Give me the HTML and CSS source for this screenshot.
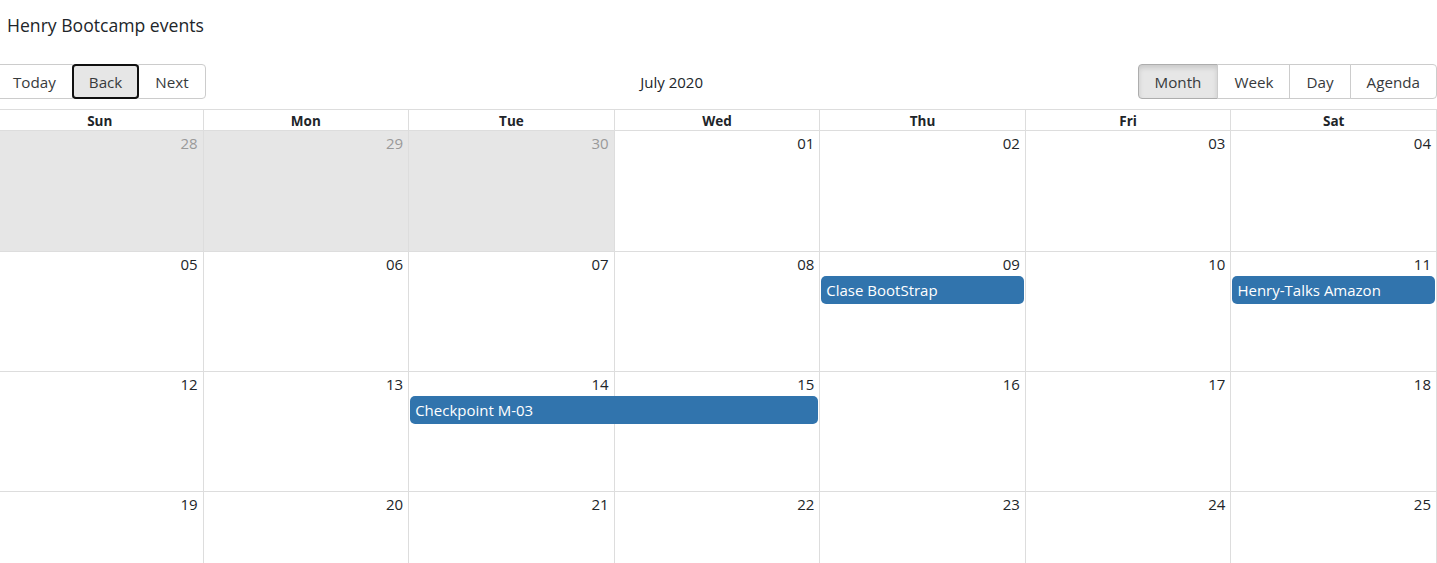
FILE: index.html
```html
<!DOCTYPE html>
<html lang="en">
<head>
<meta charset="utf-8">
<title>Henry Bootcamp events</title>
<link rel="stylesheet" href="styles.css">
</head>
<body>
<div class="app">
  <h1 class="page-title">Henry Bootcamp events</h1>
  <div class="calendar">
    <div class="toolbar">
      <span class="btn-group">
        <button type="button" class="btn">Today</button>
        <button type="button" class="btn is-focused">Back</button>
        <button type="button" class="btn">Next</button>
      </span>
      <span class="toolbar-label">July 2020</span>
      <span class="btn-group">
        <button type="button" class="btn is-active">Month</button>
        <button type="button" class="btn">Week</button>
        <button type="button" class="btn">Day</button>
        <button type="button" class="btn">Agenda</button>
      </span>
    </div>
    <div class="month-view">
      <div class="month-header">
        <div class="header-cell">Sun</div>
        <div class="header-cell">Mon</div>
        <div class="header-cell">Tue</div>
        <div class="header-cell">Wed</div>
        <div class="header-cell">Thu</div>
        <div class="header-cell">Fri</div>
        <div class="header-cell">Sat</div>
      </div>

      <div class="month-row">
        <div class="day-bg c1 off-range"></div>
        <div class="day-bg c2 off-range"></div>
        <div class="day-bg c3 off-range"></div>
        <div class="day-bg c4"></div>
        <div class="day-bg c5"></div>
        <div class="day-bg c6"></div>
        <div class="day-bg c7"></div>
        <div class="date-cell c1 off-range-text">28</div>
        <div class="date-cell c2 off-range-text">29</div>
        <div class="date-cell c3 off-range-text">30</div>
        <div class="date-cell c4">01</div>
        <div class="date-cell c5">02</div>
        <div class="date-cell c6">03</div>
        <div class="date-cell c7">04</div>
      </div>

      <div class="month-row">
        <div class="day-bg c1"></div>
        <div class="day-bg c2"></div>
        <div class="day-bg c3"></div>
        <div class="day-bg c4"></div>
        <div class="day-bg c5"></div>
        <div class="day-bg c6"></div>
        <div class="day-bg c7"></div>
        <div class="date-cell c1">05</div>
        <div class="date-cell c2">06</div>
        <div class="date-cell c3">07</div>
        <div class="date-cell c4">08</div>
        <div class="date-cell c5">09</div>
        <div class="date-cell c6">10</div>
        <div class="date-cell c7">11</div>
        <div class="segment c5 span1"><div class="event">Clase BootStrap</div></div>
        <div class="segment c7 span1"><div class="event">Henry-Talks Amazon</div></div>
      </div>

      <div class="month-row">
        <div class="day-bg c1"></div>
        <div class="day-bg c2"></div>
        <div class="day-bg c3"></div>
        <div class="day-bg c4"></div>
        <div class="day-bg c5"></div>
        <div class="day-bg c6"></div>
        <div class="day-bg c7"></div>
        <div class="date-cell c1">12</div>
        <div class="date-cell c2">13</div>
        <div class="date-cell c3">14</div>
        <div class="date-cell c4">15</div>
        <div class="date-cell c5">16</div>
        <div class="date-cell c6">17</div>
        <div class="date-cell c7">18</div>
        <div class="segment c3 span2"><div class="event">Checkpoint M-03</div></div>
      </div>

      <div class="month-row">
        <div class="day-bg c1"></div>
        <div class="day-bg c2"></div>
        <div class="day-bg c3"></div>
        <div class="day-bg c4"></div>
        <div class="day-bg c5"></div>
        <div class="day-bg c6"></div>
        <div class="day-bg c7"></div>
        <div class="date-cell c1">19</div>
        <div class="date-cell c2">20</div>
        <div class="date-cell c3">21</div>
        <div class="date-cell c4">22</div>
        <div class="date-cell c5">23</div>
        <div class="date-cell c6">24</div>
        <div class="date-cell c7">25</div>
      </div>
    </div>
  </div>
</div>
</body>
</html>
```
FILE: styles.css
```css
* {
  box-sizing: border-box;
}

html, body {
  margin: 0;
  padding: 0;
  background: #fff;
}

body {
  font-family: "Segoe UI", "Open Sans", "Noto Sans", sans-serif;
  font-size: 15px;
  color: #212529;
}

.app {
  height: 100vh;
  overflow: hidden;
}

.page-title {
  margin: 0;
  padding: 13px 7px 27px;
  font-size: 17.6px;
  line-height: 24px;
  font-weight: 400;
  color: #212529;
}

.calendar {
  margin-left: -4px;
  width: calc(100% + 4px);
}

/* Toolbar */
.toolbar {
  display: flex;
  align-items: center;
  margin-bottom: 10px;
}

.btn-group {
  display: inline-flex;
  white-space: nowrap;
}

.btn {
  font-family: inherit;
  font-size: 15.2px;
  line-height: 21px;
  color: #373a3c;
  background: #fff;
  border: 1px solid #ccc;
  border-radius: 0;
  padding: 7px 16px 5px;
  margin: 0;
}

.btn + .btn {
  margin-left: -1px;
}

.btn:first-child {
  border-radius: 4px 0 0 4px;
}

.btn:last-child {
  border-radius: 0 4px 4px 0;
}

.btn.is-active {
  background: #e6e6e6;
  border-color: #adadad;
  box-shadow: inset 0 3px 5px rgba(0, 0, 0, 0.125);
}

.btn.is-focused {
  position: relative;
  background: #e6e6e6;
  border-color: #adadad;
  border-radius: 4px;
  outline: 2px solid #101010;
  outline-offset: -2px;
}

.toolbar-label {
  flex-grow: 1;
  padding: 1px 10px 0;
  text-align: center;
  font-size: 15px;
  line-height: 21px;
}

/* Month view */
.month-view {
  border: 1px solid #ddd;
}

.month-header {
  display: grid;
  grid-template-columns: repeat(7, 1fr);
}

.header-cell {
  text-align: center;
  font-weight: 700;
  font-size: 13.5px;
  line-height: 18px;
  padding: 2px 3px 0;
  border-bottom: 1px solid #ddd;
  white-space: nowrap;
  overflow: hidden;
}

.header-cell + .header-cell {
  border-left: 1px solid #ddd;
}

.month-row {
  display: grid;
  grid-template-columns: repeat(7, 1fr);
  grid-template-rows: 24px auto 1fr;
  height: 120px;
}

.month-row + .month-row {
  border-top: 1px solid #ddd;
}

.day-bg {
  grid-row: 1 / -1;
}

.day-bg + .day-bg {
  border-left: 1px solid #ddd;
}

.day-bg.off-range {
  background: #e6e6e6;
}

.c1 { grid-column-start: 1; }
.c2 { grid-column-start: 2; }
.c3 { grid-column-start: 3; }
.c4 { grid-column-start: 4; }
.c5 { grid-column-start: 5; }
.c6 { grid-column-start: 6; }
.c7 { grid-column-start: 7; }

.span1 { grid-column-end: span 1; }
.span2 { grid-column-end: span 2; }

.date-cell {
  grid-row: 1;
  text-align: right;
  padding: 1px 5px 0 0;
  font-size: 15px;
  line-height: 23px;
  color: #212529;
}

.date-cell.off-range-text {
  color: #999;
}

.segment {
  grid-row: 2;
  padding: 0 1px 1px 2px;
  min-width: 0;
}

.event {
  background: #3174ad;
  color: #fff;
  border-radius: 5px;
  padding: 2px 5px;
  font-size: 15px;
  line-height: 24px;
  white-space: nowrap;
  overflow: hidden;
  text-overflow: ellipsis;
}
```
